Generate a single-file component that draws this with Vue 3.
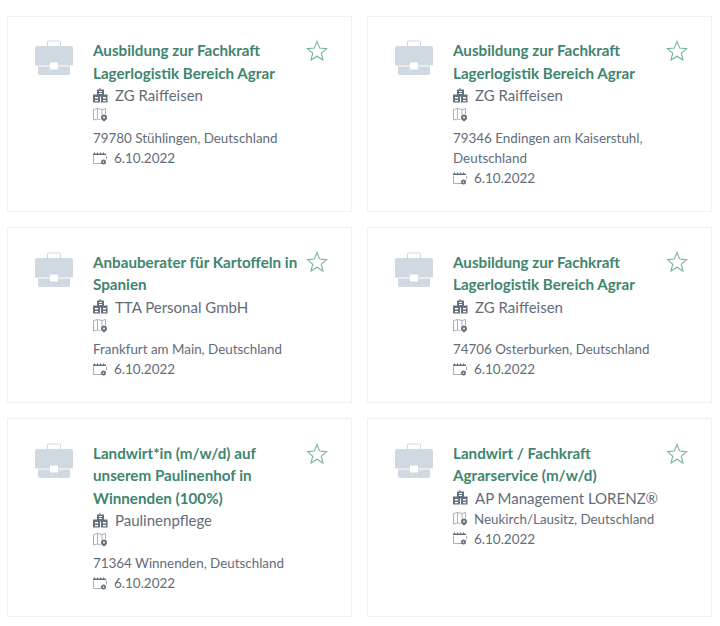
<script setup>
const jobs = [
  { title: 'Ausbildung zur Fachkraft Lagerlogistik Bereich Agrar', company: 'ZG Raiffeisen', location: '79780 Stühlingen, Deutschland' },
  { title: 'Ausbildung zur Fachkraft Lagerlogistik Bereich Agrar', company: 'ZG Raiffeisen', location: '79346 Endingen am Kaiserstuhl, Deutschland' },
  { title: 'Anbauberater für Kartoffeln in Spanien', company: 'TTA Personal GmbH', location: 'Frankfurt am Main, Deutschland' },
  { title: 'Ausbildung zur Fachkraft Lagerlogistik Bereich Agrar', company: 'ZG Raiffeisen', location: '74706 Osterburken, Deutschland' },
  { title: 'Landwirt*in (m/w/d) auf unserem Paulinenhof in Winnenden (100%)', company: 'Paulinenpflege', location: '71364 Winnenden, Deutschland' },
  { title: 'Landwirt / Fachkraft Agrarservice (m/w/d)', company: 'AP Management LORENZ®', location: 'Neukirch/Lausitz, Deutschland', inline: true },
]
</script>

<template>
  <div class="grid">
    <article v-for="(job, i) in jobs" :key="i" class="card">
      <svg class="case" width="38" height="36" viewBox="0 0 38 36">
        <path class="handle" d="M12.500 6V2a1 1 0 0 1 1-1h11a1 1 0 0 1 1 1v4" />
        <path class="body" d="M2 6h34a2 2 0 0 1 2 2v17.500H23V22.500h-8v3H0V8a2 2 0 0 1 2-2z" />
        <path class="body" d="M3 26.500h12v3h8v-3h12V33a2 2 0 0 1-2 2H5a2 2 0 0 1-2-2z" />
      </svg>
      <div class="info">
        <h3 class="title">{{ job.title }}</h3>
        <div class="company">
          <svg width="15" height="15" viewBox="0 0 15 15">
            <path class="dark" fill-rule="evenodd" d="M4 6.500V1.500h2.500V0h1v1.500H11v5h3.500v8H8V8.500H7v6H0v-8zM6 3v1h3V3zm0 2v1h3V5zM2 9v1.500h3V9zm0 3v1.200h3V12zM10 9v1.500h3V9zm0 3v1.200h3V12z" />
          </svg>
          <span>{{ job.company }}</span>
        </div>
        <div :class="job.inline ? 'place-inline' : 'place-block'">
          <svg class="map" width="15" height="14" viewBox="0 0 15 14">
            <path class="line" d="M.5 1.500 4.500.5l4.500 1 3.500-1v5.500M4.500.5v10.500M9 1.500V6.500M.5 1.500v10.500l4-1 3 .8" />
            <circle class="pin" cx="11" cy="9.500" r="3" />
            <path class="pin" d="M8.800 11.200h4.400L11 13.800z" />
            <circle cx="11" cy="9.500" r="1" fill="#fff" />
          </svg>
          <p class="location">{{ job.location }}</p>
        </div>
        <div class="date">
          <svg width="14" height="13" viewBox="0 0 14 13">
            <path class="line" d="M.5 3.500V11.500h8.500M13.500 3.500v4" />
            <path class="dark" d="M0 1.500h1V.5h1v1h2V.5h1v1h2V.5h1v1h2V.5h1v1h2v1.500H0z" />
            <circle class="dark" cx="10.500" cy="10" r="2.500" />
            <circle cx="10.500" cy="10" r=".8" fill="#fff" />
          </svg>
          <span>6.10.2022</span>
        </div>
      </div>
      <svg class="star" width="22" height="22" viewBox="0 0 22 22">
        <path d="m11 1.500 2.700 6.600 7 .5-5.400 4.500 1.700 6.900-6-3.800-6 3.800 1.700-6.900L1.300 8.600l7-.5z" />
      </svg>
    </article>
  </div>
</template>

<style scoped>
.grid {
  display: grid;
  grid-template-columns: 345px 345px;
  column-gap: 15px;
  row-gap: 15.250px;
  box-sizing: border-box;
  width: 720px;
  height: 626px;
  padding: 15.750px 0 0 7px;
  align-content: start;
  font-family: Lato, "Liberation Sans", sans-serif;
  color: #636c79;
  background: #fff;
}
.card {
  display: flex;
  align-items: flex-start;
  box-sizing: border-box;
  padding: 22.500px 23px 22.750px 27px;
  border: 1px solid #f0f1f3;
}
.case { flex: none; margin-right: 20px; margin-top: 1px; }
.handle { fill: none; stroke: #d0d8e2; stroke-width: 1; }
.body { fill: #d0d8e2; }
.info { flex: 1; min-width: 0; }
.title {
  margin: 0;
  font-size: 15.200px;
  font-weight: 700;
  line-height: 22.500px;
  color: #3f8570;
}
.company {
  display: flex;
  align-items: center;
  gap: 7px;
  height: 22px;
  font-size: 15px;
}
.company svg, .date svg { flex: none; }
.dark { fill: #667180; }
.line { fill: none; stroke: #a9b0ba; stroke-width: 1; }
.pin { fill: #667180; }
.map { display: block; flex: none; }
.place-block { padding-top: 1.750px; }
.place-inline { display: flex; align-items: center; gap: 6px; height: 20px; white-space: nowrap; }
.location {
  margin: 0;
  font-size: 13.400px;
  line-height: 20px;
}
.place-block .location { margin-top: 6px; }
.date {
  display: flex;
  align-items: center;
  gap: 7px;
  height: 20px;
  font-size: 13.500px;
}
.star {
  flex: none;
  margin-left: 4px;
  margin-top: .750px;
}
.star path { fill: none; stroke: #74b29c; stroke-width: 1.100; }
</style>
